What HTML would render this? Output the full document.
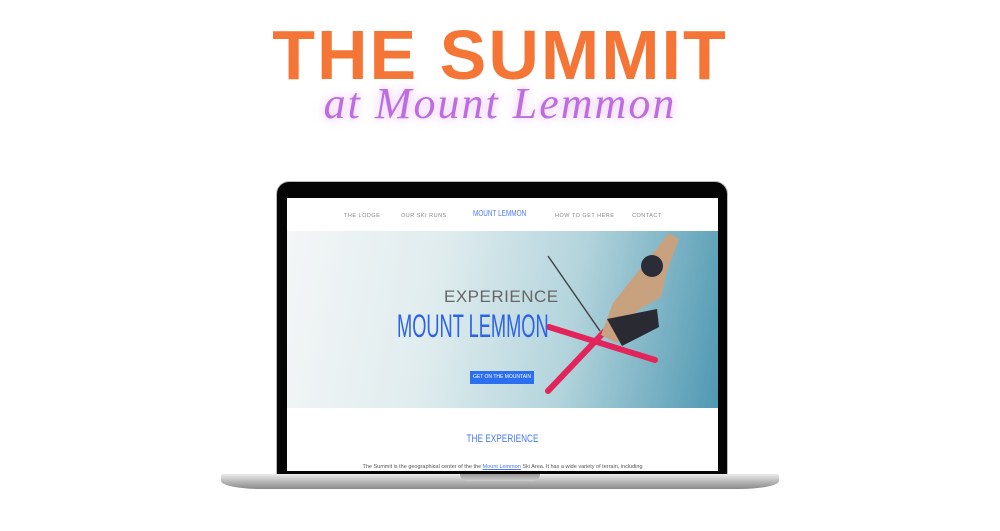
<!DOCTYPE html>
<html><head><style>
body{margin:0;width:1000px;height:531px;background:#fff;position:relative;overflow:hidden;font-family:"Liberation Sans",sans-serif}
.t{position:absolute;left:0;width:1000px;text-align:center;top:17px;font-size:70px;font-weight:bold;color:#f47535;letter-spacing:2px;line-height:76px}
.s{position:absolute;left:0;width:1000px;text-align:center;top:78px;font-family:"Liberation Serif",serif;font-style:italic;font-size:44px;color:#bf6ce0;text-shadow:0 0 8px #ecc9f8,0 0 16px #f3def9;letter-spacing:2px}
.bez{position:absolute;left:277px;top:182px;width:450px;height:293px;background:#050505;border-radius:12px 12px 0 0;box-shadow:0 0 0 1px #bbb}
.scr{position:absolute;left:287px;top:198px;width:431px;height:273px;background:#fff;overflow:hidden}
.nav{height:33px;position:relative;font-size:5.5px;color:#888;letter-spacing:.5px}
.nav span{position:absolute;top:15px}
.hero{position:absolute;top:33px;left:0;width:431px;height:177px;background:linear-gradient(100deg,#f4f6f7 0%,#dfecee 35%,#b3d4dc 65%,#4f98b2 100%)}
.base{position:absolute;left:221px;top:474px;width:558px;height:15px;background:linear-gradient(#ececec,#b8b8b8 50%,#8a8a8a);border-radius:2px 2px 40px 40px/2px 2px 8px 8px}
.notch{position:absolute;left:460px;top:474px;width:80px;height:7px;background:linear-gradient(#999,#ccc);border-radius:0 0 8px 8px}
</style></head><body>
<div class="t">THE SUMMIT</div>
<div class="s">at Mount Lemmon</div>
<div class="bez"></div>
<div class="scr">
 <div class="nav">
  <span style="left:57px">THE LODGE</span>
  <span style="left:114px">OUR SKI RUNS</span>
  <span style="left:186px;top:11px;font-size:8px;color:#4a7bf0;letter-spacing:0;transform:scaleX(.8);transform-origin:left">MOUNT LEMMON</span>
  <span style="left:268px">HOW TO GET HERE</span>
  <span style="left:345px">CONTACT</span>
 </div>
 <div class="hero">
  <svg width="431" height="177" style="position:absolute;left:0;top:0">
   <line x1="261" y1="25" x2="313" y2="100" stroke="#444" stroke-width="1.5"/>
   <line x1="262" y1="96" x2="368" y2="129" stroke="#e3245a" stroke-width="6" stroke-linecap="round"/>
   <line x1="261" y1="160" x2="318" y2="100" stroke="#e3245a" stroke-width="6" stroke-linecap="round"/>
   <path d="M382 2 L392 8 L380 40 L374 66 L350 80 L330 112 L314 104 L326 72 L345 48 Z" fill="#c8a27f"/>
   <path d="M320 88 L370 78 L372 96 L335 115 Z" fill="#2a2a33"/>
   <circle cx="365" cy="35" r="11" fill="#2a2d38"/>
  </svg>
  <div style="position:absolute;left:157px;top:56px;font-size:17px;color:#666;letter-spacing:.5px">EXPERIENCE</div>
  <div style="position:absolute;left:110px;top:77px;font-size:32px;color:#2b63e8;transform:scaleX(.57);transform-origin:left;white-space:nowrap">MOUNT LEMMON</div>
  <div style="position:absolute;left:183px;top:140px;width:64px;height:13px;background:#2b6ef0;color:#fff;font-size:5px;line-height:13px;text-align:center">GET ON THE MOUNTAIN</div>
 </div>
 <div style="position:absolute;top:235px;left:0;width:431px;text-align:center;font-size:11px;color:#4a7bf0;transform:scaleX(.75)">THE EXPERIENCE</div>
 <div style="position:absolute;top:266px;left:0;width:431px;text-align:center;font-size:5.5px;color:#555">The Summit is the geographical center of the the <u style="color:#4a7bf0">Mount Lemmon</u> Ski Area. It has a wide variety of terrain, including</div>
</div>
<div class="base"></div>
<div class="notch"></div>
</body></html>
